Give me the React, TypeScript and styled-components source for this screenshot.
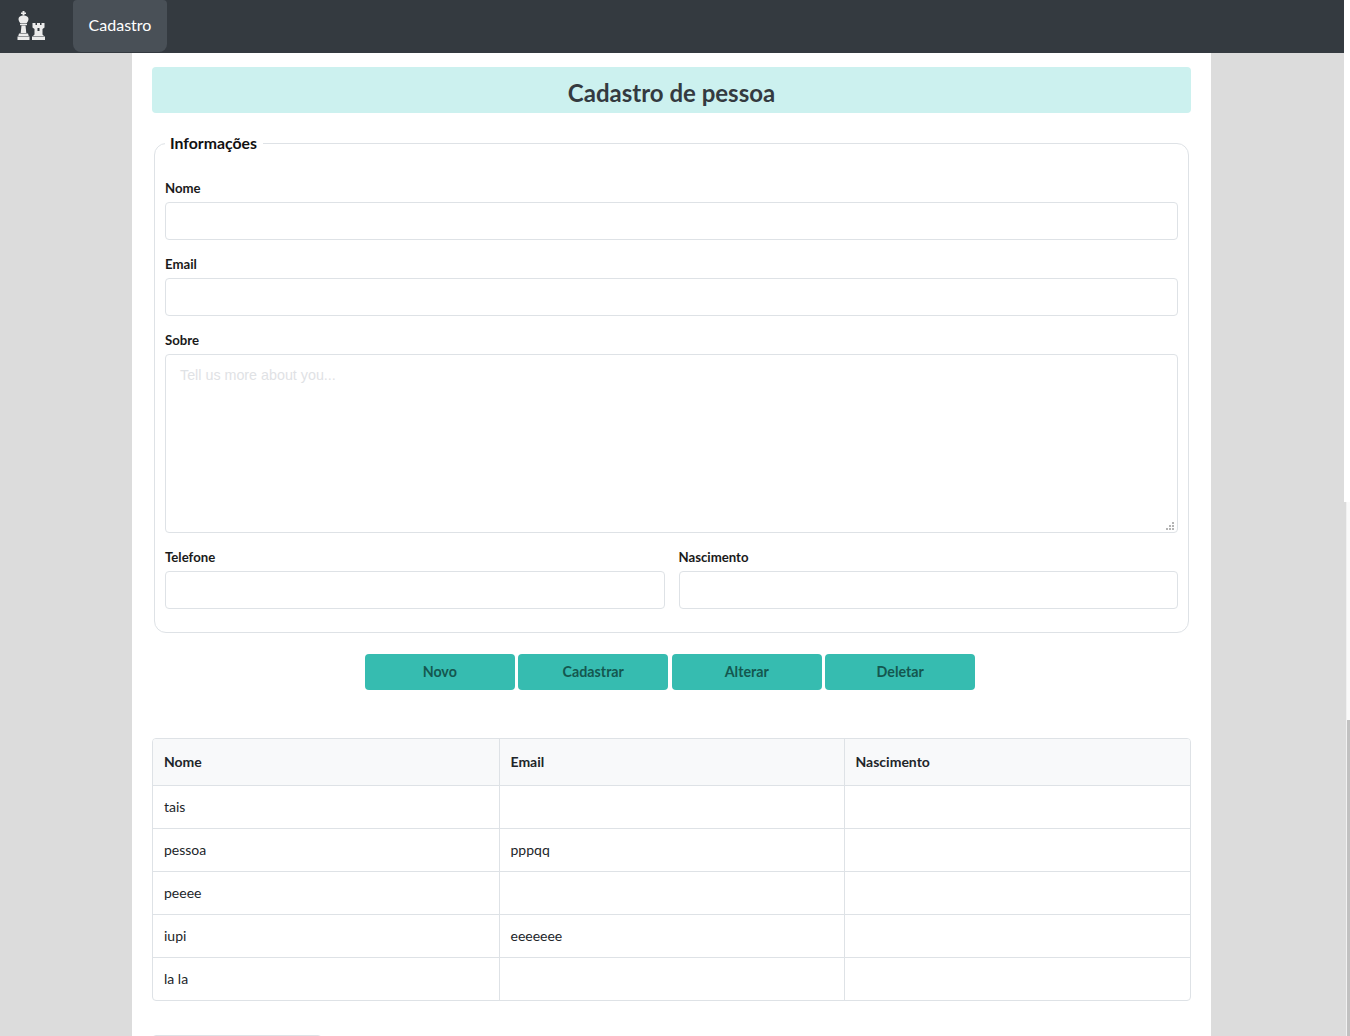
import React from "react";
import styled, { createGlobalStyle } from "styled-components";

const Global = createGlobalStyle`
  html, body { margin: 0; padding: 0; height: 1036px; overflow: hidden; background: #fff; }
  body { font-family: Lato, "Liberation Sans", sans-serif; color: #212529; }
  * { box-sizing: border-box; }
`;

const Page = styled.div`
  width: 1344px;
  height: 1036px;
  overflow: hidden;
  background: #dcdcdc;
`;

const NavBar = styled.nav`
  height: 53px;
  background: #343a40;
  display: flex;
  align-items: stretch;
  padding-left: 16px;
  gap: 27px;
`;

const Brand = styled.div`
  display: flex;
  align-items: center;
  padding-bottom: 1px;
`;

const NavItem = styled.a`
  width: 94px;
  height: 52px;
  padding-bottom: 3px;
  background: #495057;
  border-radius: 4px 4px 8px 8px;
  color: #fff;
  font-size: 16px;
  display: flex;
  align-items: center;
  justify-content: center;
`;

const Main = styled.main`
  width: 1079px;
  margin-left: 132px;
  background: #fff;
  padding: 14px 20px 0;
  height: 983px;
`;

const Banner = styled.h1`
  margin: 0;
  height: 46px;
  padding-top: 5px;
  border-radius: 4px;
  background: #ccf1ef;
  color: #343a40;
  font-size: 24px;
  font-weight: 700;
  display: flex;
  align-items: center;
  justify-content: center;
`;

const FieldSet = styled.fieldset`
  margin: 20px 2px 0;
  padding: 11px 10px 23px;
  border: 1px solid #dee2e6;
  border-radius: 12px;
  min-width: 0;
`;

const Legend = styled.legend`
  margin-left: 0;
  padding: 0 6px 0 5px;
  font-size: 15.8px;
  font-weight: 700;
  color: #111;
  line-height: 20px;
`;

const Field = styled.div`
  display: flex;
  flex-direction: column;
  min-width: 0;
  flex: 1;
  margin-top: 16px;
`;

const Label = styled.label`
  font-size: 13.2px;
  font-weight: 700;
  line-height: 16px;
  color: #1a1a1a;
  margin-bottom: 6px;
`;

const Input = styled.input`
  height: 38px;
  width: 100%;
  border: 1px solid #dee2e6;
  border-radius: 4px;
  background: #fff;
  outline: none;
`;

const AreaWrap = styled.div`
  position: relative;
`;

const TextArea = styled.textarea`
  display: block;
  height: 179px;
  width: 100%;
  border: 1px solid #dee2e6;
  border-radius: 4px;
  padding: 12px 14px;
  font-family: "Liberation Sans", Arial, sans-serif;
  font-size: 14.3px;
  line-height: 17px;
  outline: none;
  resize: none;
  &::placeholder { color: #dfe2e5; opacity: 1; }
`;

const Grip = styled.svg`
  position: absolute;
  right: 3px;
  bottom: 2px;
  width: 9px;
  height: 9px;
`;

const Row = styled.div`
  display: flex;
  gap: 14px;
`;

const Actions = styled.div`
  display: flex;
  justify-content: center;
  gap: 3.5px;
  margin-top: 21px;
  padding-right: 3px;
`;

const Btn = styled.button`
  width: 150px;
  height: 36px;
  border: 0;
  border-radius: 4px;
  background: #36bcb0;
  color: #14574f;
  font-family: inherit;
  font-size: 14.25px;
  font-weight: 700;
  padding: 0 0 2px;
`;

const TableWrap = styled.div`
  margin-top: 48px;
  border: 1px solid #dee2e6;
  border-radius: 4px;
  overflow: hidden;
`;

const Table = styled.table`
  width: 100%;
  border-collapse: collapse;
  table-layout: fixed;
  font-size: 14px;
`;

const Th = styled.th<{ $w?: number }>`
  height: 46px;
  padding: 0 11px;
  text-align: left;
  font-weight: 700;
  background: #f8f9fa;
  color: #212529;
  border-bottom: 1px solid #dee2e6;
  width: ${(p) => (p.$w ? `${p.$w}px` : "auto")};
  & + & { border-left: 1px solid #dee2e6; }
`;

const Td = styled.td`
  height: 43px;
  padding: 0 11px;
  color: #212529;
  border-bottom: 1px solid #dee2e6;
  & + & { border-left: 1px solid #dee2e6; }
  tr:last-child > & { border-bottom: 0; }
`;

const NextBox = styled.div`
  margin-top: 34px;
  width: 170px;
  height: 30px;
  border: 1px solid #dee2e6;
  border-radius: 4px;
`;

const ScrollGap = styled.div`
  position: fixed;
  top: 0;
  left: 1344px;
  width: 6px;
  height: 502px;
  background: #fff;
`;

const ScrollTrack = styled.div`
  position: fixed;
  top: 502px;
  left: 1344px;
  width: 6px;
  height: 534px;
  background: linear-gradient(to right, #dcdcdc 0 2px, #f1f1f1 2px 3px, #fafafa 3px);
`;

const ScrollThumb = styled.div`
  position: fixed;
  top: 720px;
  left: 1347px;
  width: 3px;
  height: 316px;
  background: #c1c1c1;
`;

const Logo = () => (
  <svg width="30" height="30" viewBox="0 0 30 30" fill="#ececec" aria-hidden="true">
    <path d="M6.500 0h2v1.500h1.500V3H8.500v1.500h-2V3H5V1.500h1.500z" />
    <path d="M7.500 4.500c3 0 5 1.500 5 3.500 0 1.800-1.200 3.200-2 4.500h-6c-.8-1.300-2-2.700-2-4.500 0-2 2-3.500 5-3.500z" />
    <path d="M4 13h7v1.200H4z" />
    <path d="M5.500 14.500h4l.8 7.500H4.700z" />
    <path d="M3 22.500h9l.7 2.500H2.300z" />
    <path d="M1.500 25.500h12V29h-12z" />
    <path fillRule="evenodd" d="M16.500 12h3v2H21v-2h3v2h1.500v-2h3v4.500l-2 1.500v5.500l1.500 1.500H17l1.500-1.500V18l-2-1.500zM21.500 17h2v3h-2z" />
    <path d="M16 25.500h13V29H16z" />
  </svg>
);

const GripDots = () => (
  <Grip viewBox="0 0 9 9" fill="#b4b4b4" aria-hidden="true">
    <rect x="6" y="0" width="2" height="2" />
    <rect x="3" y="3" width="2" height="2" />
    <rect x="6" y="3" width="2" height="2" />
    <rect x="0" y="6" width="2" height="2" />
    <rect x="3" y="6" width="2" height="2" />
    <rect x="6" y="6" width="2" height="2" />
  </Grip>
);

const rows = [
  ["tais", ""],
  ["pessoa", "pppqq"],
  ["peeee", ""],
  ["iupi", "eeeeeee"],
  ["la la", ""],
];

export default function App() {
  return (
    <>
      <Global />
      <Page>
        <NavBar>
          <Brand>
            <Logo />
          </Brand>
          <NavItem>Cadastro</NavItem>
        </NavBar>
        <Main>
          <Banner>Cadastro de pessoa</Banner>
          <FieldSet>
            <Legend>Informações</Legend>
            <Field>
              <Label>Nome</Label>
              <Input />
            </Field>
            <Field>
              <Label>Email</Label>
              <Input />
            </Field>
            <Field>
              <Label>Sobre</Label>
              <AreaWrap>
                <TextArea placeholder="Tell us more about you..." />
                <GripDots />
              </AreaWrap>
            </Field>
            <Row>
              <Field>
                <Label>Telefone</Label>
                <Input />
              </Field>
              <Field>
                <Label>Nascimento</Label>
                <Input />
              </Field>
            </Row>
          </FieldSet>
          <Actions>
            <Btn>Novo</Btn>
            <Btn>Cadastrar</Btn>
            <Btn>Alterar</Btn>
            <Btn>Deletar</Btn>
          </Actions>
          <TableWrap>
            <Table>
              <thead>
                <tr>
                  <Th $w={346}>Nome</Th>
                  <Th $w={345}>Email</Th>
                  <Th>Nascimento</Th>
                </tr>
              </thead>
              <tbody>
                {rows.map(([n, e]) => (
                  <tr key={n}>
                    <Td>{n}</Td>
                    <Td>{e}</Td>
                    <Td />
                  </tr>
                ))}
              </tbody>
            </Table>
          </TableWrap>
          <NextBox />
        </Main>
      </Page>
      <ScrollGap />
      <ScrollTrack />
      <ScrollThumb />
    </>
  );
}
